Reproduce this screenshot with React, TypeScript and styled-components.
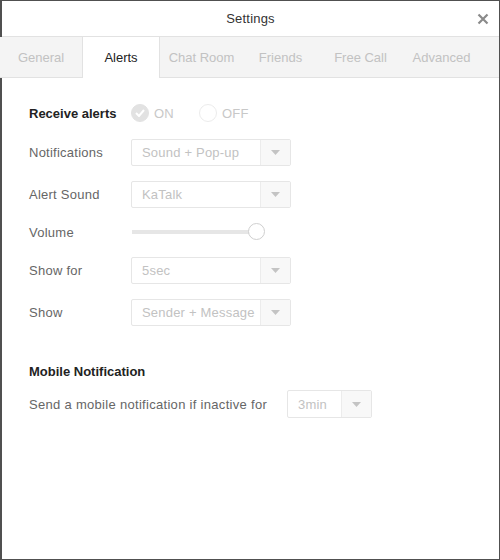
import styled, { createGlobalStyle } from "styled-components";

const Global = createGlobalStyle`
    html, body {
        margin: 0;
        padding: 0;
        background: #ffffff;
    }
    body {
        font-family: "Liberation Sans", Arial, sans-serif;
        font-size: 13px;
    }
`;

const Window = styled.div`
    box-sizing: border-box;
    width: 500px;
    height: 560px;
    background: #ffffff;
    border: 1px solid #505050;
    border-left-width: 2px;
    display: flex;
    flex-direction: column;
`;

const TitleBar = styled.div`
    height: 35px;
    display: flex;
    align-items: center;
    justify-content: center;
    position: relative;
    color: #333333;
    font-size: 13px;
    letter-spacing: 0.2px;
    border-bottom: 1px solid #e2e2e2;
`;

const CloseBtn = styled.div`
    position: absolute;
    right: 10px;
    top: 12px;
    width: 12px;
    height: 12px;
    display: flex;
`;

const TabBar = styled.div`
    height: 40px;
    display: flex;
    background: #f4f4f4;
    border-bottom: 1px solid #e2e2e2;
    margin-left: -2px;
`;

const Tab = styled.div<{ $w: number; $active?: boolean }>`
    box-sizing: border-box;
    width: ${(p) => p.$w}px;
    height: ${(p) => (p.$active ? "41px" : "40px")};
    display: flex;
    align-items: center;
    justify-content: center;
    color: ${(p) => (p.$active ? "#222222" : "#c2c2c2")};
    background: ${(p) => (p.$active ? "#ffffff" : "transparent")};
    border-left: ${(p) => (p.$active ? "1px solid #e2e2e2" : "none")};
    border-right: ${(p) => (p.$active ? "1px solid #e2e2e2" : "none")};
    padding-bottom: ${(p) => (p.$active ? "1px" : "0")};
`;

const Content = styled.div`
    padding: 25px 0 0 27px;
    display: flex;
    flex-direction: column;
`;

const Row = styled.div<{ $h: number; $mt: number }>`
    height: ${(p) => p.$h}px;
    margin-top: ${(p) => p.$mt}px;
    display: flex;
    align-items: center;
`;

const Label = styled.div<{ $bold?: boolean }>`
    width: 102px;
    color: ${(p) => (p.$bold ? "#222222" : "#666666")};
    font-weight: ${(p) => (p.$bold ? 700 : 400)};
    letter-spacing: ${(p) => (p.$bold ? "0" : "0.25px")};
    white-space: nowrap;
`;

const Heading = styled.div`
    color: #222222;
    font-weight: 700;
`;

const Text = styled.div`
    color: #666666;
    letter-spacing: 0.3px;
    margin-right: 20px;
`;

const RadioGroup = styled.label`
    display: flex;
    align-items: center;
    gap: 5px;
    color: #c8c8c8;
    letter-spacing: 0.25px;
    margin-right: 25px;
`;

const RadioCircle = styled.span<{ $checked?: boolean }>`
    box-sizing: border-box;
    width: 18px;
    height: 18px;
    border-radius: 50%;
    background: ${(p) => (p.$checked ? "#e2e2e2" : "#ffffff")};
    border: 1px solid ${(p) => (p.$checked ? "#e2e2e2" : "#ececec")};
    display: flex;
    align-items: center;
    justify-content: center;
`;

const Select = styled.div<{ $w: number }>`
    box-sizing: border-box;
    width: ${(p) => p.$w}px;
    height: 100%;
    border: 1px solid #e6e6e6;
    border-radius: 2px;
    display: flex;
    color: #c2c2c2;
    letter-spacing: 0.2px;
`;

const SelectValue = styled.div`
    flex: 1;
    display: flex;
    align-items: center;
    padding-left: 10px;
    white-space: nowrap;
    overflow: hidden;
`;

const SelectArrow = styled.div`
    width: 29px;
    border-left: 1px solid #ececec;
    background: #f8f8f8;
    display: flex;
    align-items: center;
    justify-content: center;
`;

const Slider = styled.div`
    position: relative;
    width: 134px;
    height: 18px;
    display: flex;
    align-items: center;
`;

const Track = styled.div`
    width: 119px;
    height: 4px;
    margin-left: 1px;
    background: #e6e6e6;
`;

const Thumb = styled.div`
    position: absolute;
    left: 117px;
    top: 0;
    box-sizing: border-box;
    width: 17px;
    height: 17px;
    border-radius: 50%;
    background: #ffffff;
    border: 1px solid #cfcfcf;
`;

const tabs = [
    { name: "General", w: 82 },
    { name: "Alerts", w: 78 },
    { name: "Chat Room", w: 83 },
    { name: "Friends", w: 75 },
    { name: "Free Call", w: 85 },
    { name: "Advanced", w: 77 },
];

function Arrow() {
    return (
        <svg width="9" height="5" viewBox="0 0 9 5">
            <polygon points="0,0 9,0 4.5,5" fill="#c4c4c4" />
        </svg>
    );
}

function Dropdown({ value, w }: { value: string; w: number }) {
    return (
        <Select $w={w}>
            <SelectValue>{value}</SelectValue>
            <SelectArrow>
                <Arrow />
            </SelectArrow>
        </Select>
    );
}

export default function App() {
    return (
        <>
            <Global />
            <Window>
                <TitleBar>
                    Settings
                    <CloseBtn>
                        <svg width="12" height="12" viewBox="0 0 12 12">
                            <path d="M1.5 1.5 L10.5 10.5 M10.5 1.5 L1.5 10.5" stroke="#8a8a8a" strokeWidth="2.2" />
                        </svg>
                    </CloseBtn>
                </TitleBar>
                <TabBar>
                    {tabs.map((t) => (
                        <Tab key={t.name} $w={t.w} $active={t.name === "Alerts"}>
                            {t.name}
                        </Tab>
                    ))}
                </TabBar>
                <Content>
                    <Row $h={20} $mt={0}>
                        <Label $bold>Receive alerts</Label>
                        <RadioGroup>
                            <RadioCircle $checked>
                                <svg width="10" height="8" viewBox="0 0 10 8">
                                    <path d="M1 4 L4 7 L9 1" stroke="#ffffff" strokeWidth="2" fill="none" />
                                </svg>
                            </RadioCircle>
                            ON
                        </RadioGroup>
                        <RadioGroup>
                            <RadioCircle />
                            OFF
                        </RadioGroup>
                    </Row>
                    <Row $h={27} $mt={16}>
                        <Label>Notifications</Label>
                        <Dropdown value="Sound + Pop-up" w={160} />
                    </Row>
                    <Row $h={27} $mt={15}>
                        <Label>Alert Sound</Label>
                        <Dropdown value="KaTalk" w={160} />
                    </Row>
                    <Row $h={20} $mt={14}>
                        <Label>Volume</Label>
                        <Slider>
                            <Track />
                            <Thumb />
                        </Slider>
                    </Row>
                    <Row $h={27} $mt={15}>
                        <Label>Show for</Label>
                        <Dropdown value="5sec" w={160} />
                    </Row>
                    <Row $h={27} $mt={15}>
                        <Label>Show</Label>
                        <Dropdown value="Sender + Message" w={160} />
                    </Row>
                    <Row $h={20} $mt={35}>
                        <Heading>Mobile Notification</Heading>
                    </Row>
                    <Row $h={28} $mt={9}>
                        <Text>Send a mobile notification if inactive for</Text>
                        <Dropdown value="3min" w={85} />
                    </Row>
                </Content>
            </Window>
        </>
    );
}
